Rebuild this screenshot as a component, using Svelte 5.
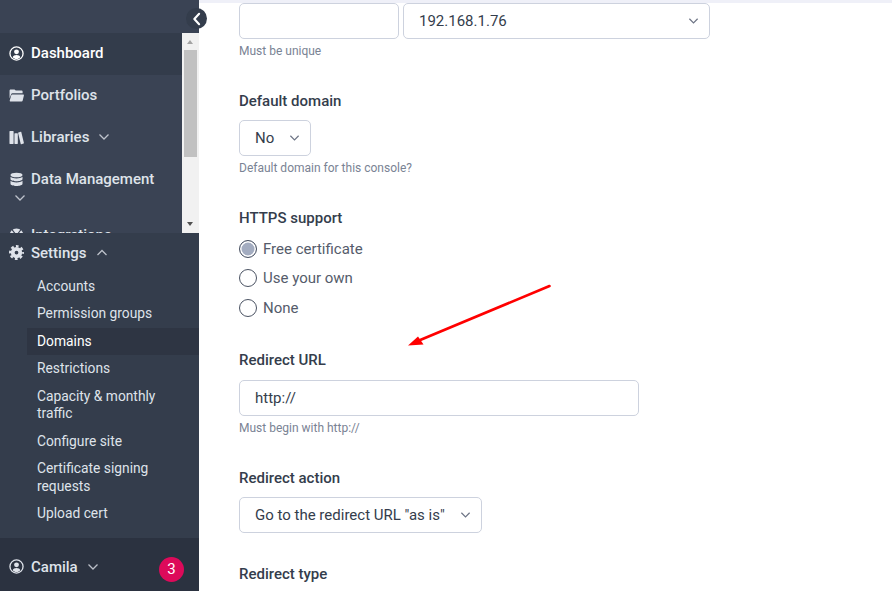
<script>
  const links = [
    { label: "Accounts" },
    { label: "Permission groups" },
    { label: "Domains", active: true },
    { label: "Restrictions" },
    { label: "Capacity & monthly traffic" },
    { label: "Configure site" },
    { label: "Certificate signing requests" },
    { label: "Upload cert" },
  ];
  const httpsOptions = ["Free certificate", "Use your own", "None"];
</script>

{#snippet chevron()}
  <svg class="chev" viewBox="0 0 12 8" width="12" height="8"><path d="M1.500 1.500 6 6l4.500-4.500" /></svg>
{/snippet}

{#snippet chevronUp()}
  <svg class="chev" viewBox="0 0 12 8" width="12" height="8"><path d="M1.500 6 6 1.500 10.500 6" /></svg>
{/snippet}

{#snippet userIcon()}
  <svg class="icon" viewBox="0 0 16 16">
    <circle cx="8" cy="8" r="7" fill="none" stroke="currentColor" stroke-width="1.400" />
    <circle cx="8" cy="6.200" r="2.600" fill="currentColor" />
    <path d="M3.900 12c.6-1.800 2-2.500 4.100-2.500s3.500.7 4.100 2.500C11 13.300 9.600 13.900 8 13.900S5 13.300 3.900 12z" fill="currentColor" />
  </svg>
{/snippet}

<div class="page">
  <aside class="sidebar">
    <div class="brand"></div>
    <div class="nav-wrap">
      <nav class="nav">
        <a class="item current" href="#dashboard">{@render userIcon()}<span>Dashboard</span></a>
        <a class="item" href="#portfolios">
          <svg class="icon" viewBox="0 0 16 16"><path fill="currentColor" d="M1.800 1.500h4.100l1.300 1.200h6.300c.6 0 1 .4 1 1v2H4.300c-1.100 0-1.900.5-2.200 1.500L.6 11V2.700c0-.7.500-1.200 1.200-1.200zM3.400 6.800h11.700c.6 0 .9.500.8 1.100l-1.300 5.500c-.1.600-.6 1-1.200 1H1.700c-.7 0-1.100-.5-.9-1.100l1.600-5.700c.1-.5.500-.8 1-.8z" /></svg>
          <span>Portfolios</span>
        </a>
        <a class="item" href="#libraries">
          <svg class="icon" viewBox="0 0 16 16"><path fill="currentColor" d="M1 1h3.400c.3 0 .5.200.5.500v13c0 .3-.2.500-.5.500H1c-.3 0-.5-.2-.5-.5v-13c0-.3.200-.5.500-.5zM6.300 3.500h2.600c.3 0 .5.200.5.500v10.500c0 .3-.2.500-.5.500H6.300c-.3 0-.5-.2-.5-.5V4c0-.3.200-.5.500-.5zM10 2.600l2.500-.7c.3-.1.500.1.600.3l2.800 11.700c.1.300-.1.500-.3.600l-2.500.6c-.3.100-.5-.1-.6-.3L9.700 3.200c-.1-.3.100-.5.300-.6z" /></svg>
          <span>Libraries</span>{@render chevron()}
        </a>
        <a class="item wrap" href="#data">
          <svg class="icon" viewBox="0 0 16 16"><g fill="currentColor"><ellipse cx="8" cy="3.200" rx="6.400" ry="2.500" /><path d="M1.600 5C3 6.200 5.300 6.800 8 6.800s5-.6 6.400-1.800v2.400c0 1.400-2.900 2.400-6.400 2.400S1.600 8.800 1.600 7.400z" /><path d="M1.600 9.300c1.400 1.200 3.700 1.800 6.400 1.800s5-.6 6.400-1.800v3.200c0 1.400-2.900 2.400-6.400 2.400s-6.400-1-6.400-2.400z" /></g></svg>
          <span>Data Management</span><i class="break"></i>{@render chevron()}
        </a>
        <a class="item" href="#integrations">
          <svg class="icon" viewBox="0 0 16 16">
            <circle cx="8" cy="8" r="7.400" fill="currentColor" />
            <path d="M3 1.500 8 8l5-6.500" fill="none" stroke="#3a4354" stroke-width="1.200" />
          </svg>
          <span>Integrations</span>
        </a>
      </nav>
      <div class="scrollbar">
        <span class="arrow up"></span>
        <span class="thumb"></span>
        <span class="arrow down"></span>
      </div>
    </div>

    <section class="settings">
      <a class="item" href="#settings">
        <svg class="icon" viewBox="0 0 16 16">
          <circle cx="8" cy="8" r="4" fill="none" stroke="currentColor" stroke-width="4" />
          <circle cx="8" cy="8" r="6.800" fill="none" stroke="currentColor" stroke-width="2.400" stroke-dasharray="2.900 2.440" stroke-dashoffset="1.450" />
        </svg>
        <span>Settings</span>{@render chevronUp()}
      </a>
      <ul class="sub">
        {#each links as link}
          <li class:active={link.active}><a href="#sub">{link.label}</a></li>
        {/each}
      </ul>
    </section>

    <footer class="account">
      {@render userIcon()}<span>Camila</span>{@render chevron()}
      <span class="badge">3</span>
    </footer>

    <button class="collapse" aria-label="Collapse menu">
      <svg viewBox="0 0 10 16" width="9" height="14"><path d="M8 2 2.500 8 8 14" /></svg>
    </button>
  </aside>

  <main class="main">
    <div class="field first">
      <div class="row">
        <input class="control host" type="text" />
        <div class="select ip"><span>192.168.1.76</span>{@render chevron()}</div>
      </div>
      <p class="hint">Must be unique</p>
    </div>

    <div class="field">
      <h3>Default domain</h3>
      <div class="select no"><span>No</span>{@render chevron()}</div>
      <p class="hint">Default domain for this console?</p>
    </div>

    <div class="field">
      <h3>HTTPS support</h3>
      <div class="radios">
        {#each httpsOptions as option, i}
          <label class="radio">
            <input type="radio" name="https" checked={i === 0} />
            <span>{option}</span>
          </label>
        {/each}
      </div>
    </div>

    <div class="field url">
      <h3>Redirect URL</h3>
      <input class="control wide" type="text" value="http://" />
      <p class="hint">Must begin with http://</p>
    </div>

    <div class="field">
      <h3>Redirect action</h3>
      <div class="select action"><span>Go to the redirect URL "as is"</span>{@render chevron()}</div>
    </div>

    <div class="field last">
      <h3>Redirect type</h3>
    </div>

    <svg class="annotation" viewBox="0 0 892 591" width="892" height="591">
      <path d="M549.500 286 419 340.500" stroke="#ff0000" stroke-width="2.600" stroke-linecap="round" fill="none" />
      <path d="M408 345.500 418 336.500 423.500 344.500z" fill="#ff0000" />
    </svg>
  </main>
</div>

<style>
  :global(body) {
    margin: 0;
    background: #fff;
    font-family: Roboto, "Liberation Sans", sans-serif;
  }

  a {
    color: inherit;
    text-decoration: none;
  }

  .page {
    display: flex;
    width: 892px;
    height: 591px;
    overflow: hidden;
  }

  .sidebar {
    position: relative;
    display: flex;
    flex-direction: column;
    flex: 0 0 199px;
    height: 591px;
    background: #3a4354;
    color: #dfe3ea;
  }

  .brand {
    flex: 0 0 33px;
  }

  .nav-wrap {
    display: flex;
    flex: 0 0 200px;
    min-height: 0;
  }

  .nav {
    flex: 1;
    min-width: 0;
    overflow: hidden;
  }

  .item {
    display: flex;
    flex-wrap: wrap;
    align-items: center;
    min-height: 42px;
    padding: 0 9px 2px;
    box-sizing: border-box;
    font-size: 15px;
    font-weight: 500;
    line-height: 18px;
  }

  .item.current {
    background: #333c4b;
    color: #fff;
  }

  .item.wrap {
    height: 56px;
    padding-top: 11px;
    align-content: flex-start;
  }

  .break {
    flex: 0 0 100%;
    height: 0;
  }

  .icon {
    flex: none;
    width: 15px;
    height: 15px;
    margin-right: 7px;
  }

  .chev {
    flex: none;
    margin-left: 9px;
    fill: none;
    stroke: currentColor;
    stroke-width: 1.300;
    opacity: 0.8;
  }

  .item.wrap .chev {
    margin-left: 5px;
    margin-top: 6px;
  }

  .scrollbar {
    position: relative;
    flex: 0 0 17px;
    background: #f1f1f1;
  }

  .thumb {
    position: absolute;
    top: 17px;
    left: 2px;
    width: 13px;
    height: 107px;
    background: #c1c1c1;
  }

  .arrow {
    position: absolute;
    left: 5px;
    width: 0;
    height: 0;
    border-left: 3.500px solid transparent;
    border-right: 3.500px solid transparent;
  }

  .arrow.up {
    top: 7px;
    border-bottom: 4px solid #a3a3a3;
  }

  .arrow.down {
    bottom: 7px;
    border-top: 4px solid #505050;
  }

  .settings {
    flex: 0 0 305px;
    box-sizing: border-box;
    background: #343d4c;
  }

  .settings .item {
    min-height: 39.500px;
    padding-bottom: 0;
  }

  .sub {
    list-style: none;
    margin: 0;
    padding: 0 0 0 27px;
    font-size: 13.800px;
    font-weight: 400;
    line-height: 17.500px;
  }

  .sub a {
    display: block;
    padding: 5px 30px 5px 10px;
  }

  .sub li.active {
    background: #2e3543;
    color: #fff;
  }

  .account {
    position: relative;
    display: flex;
    align-items: center;
    flex: 1;
    padding: 4px 9px 0;
    background: #2b3240;
    font-size: 15px;
    font-weight: 500;
  }

  .badge {
    position: absolute;
    left: 159px;
    top: 19px;
    width: 25px;
    height: 25px;
    border-radius: 50%;
    background: #dd0a5a;
    color: #fff;
    font-size: 15px;
    font-weight: 400;
    line-height: 25px;
    text-align: center;
  }

  .collapse {
    position: absolute;
    top: 8px;
    right: -8px;
    width: 21px;
    height: 21px;
    padding: 0;
    border: 0;
    border-radius: 50%;
    background: #343d4c;
    display: flex;
    align-items: center;
    justify-content: center;
  }

  .collapse path {
    fill: none;
    stroke: #fff;
    stroke-width: 2.400;
    stroke-linecap: round;
    stroke-linejoin: round;
  }

  .main {
    position: relative;
    flex: 1;
    min-width: 0;
    box-sizing: border-box;
    padding: 0 0 0 40px;
    border-top: 3px solid #eff0f8;
    color: #343d4c;
    overflow: hidden;
  }

  .annotation {
    position: absolute;
    left: -199px;
    top: -3px;
    pointer-events: none;
  }

  .field {
    margin-top: 32px;
  }

  .field.first {
    margin-top: 0;
  }

  .field.url {
    margin-top: 27px;
  }

  .field.url h3 {
    margin-bottom: 10px;
  }

  .field.last {
    margin-top: 31px;
  }

  .row {
    display: flex;
    gap: 4px;
  }

  h3 {
    margin: 0 0 9px;
    font-size: 15px;
    font-weight: 500;
    line-height: 20px;
  }

  .hint {
    margin: 4px 0 0;
    font-size: 12px;
    line-height: 16px;
    color: #7a8394;
  }

  .control,
  .select {
    box-sizing: border-box;
    height: 36px;
    border: 1px solid #cdd2de;
    border-radius: 5px;
    background: #fff;
    font-family: inherit;
    font-size: 15px;
    color: #343d4c;
  }

  .control {
    display: block;
    padding: 0 15px;
    outline: none;
  }

  .select {
    display: flex;
    align-items: center;
    justify-content: space-between;
    padding: 0 10px 0 15px;
  }

  .select .chev {
    stroke: #6d7485;
    margin-left: 0;
    width: 11px;
    opacity: 1;
  }

  .host {
    width: 160px;
  }

  .ip {
    width: 307px;
  }

  .no {
    width: 72px;
  }

  .wide {
    width: 400px;
  }

  .action {
    width: 243px;
  }

  .radios {
    margin-top: -3px;
  }

  .radio {
    display: flex;
    align-items: center;
    gap: 6px;
    height: 29.500px;
    font-size: 15px;
    color: #555c6b;
  }

  .radio input {
    appearance: none;
    box-sizing: border-box;
    width: 18px;
    height: 18px;
    margin: 0;
    border: 1.500px solid #4b5363;
    border-radius: 50%;
    background: #fff;
  }

  .radio input:checked {
    background: #a3acc0;
    box-shadow: inset 0 0 0 1.500px #fff;
  }
</style>
